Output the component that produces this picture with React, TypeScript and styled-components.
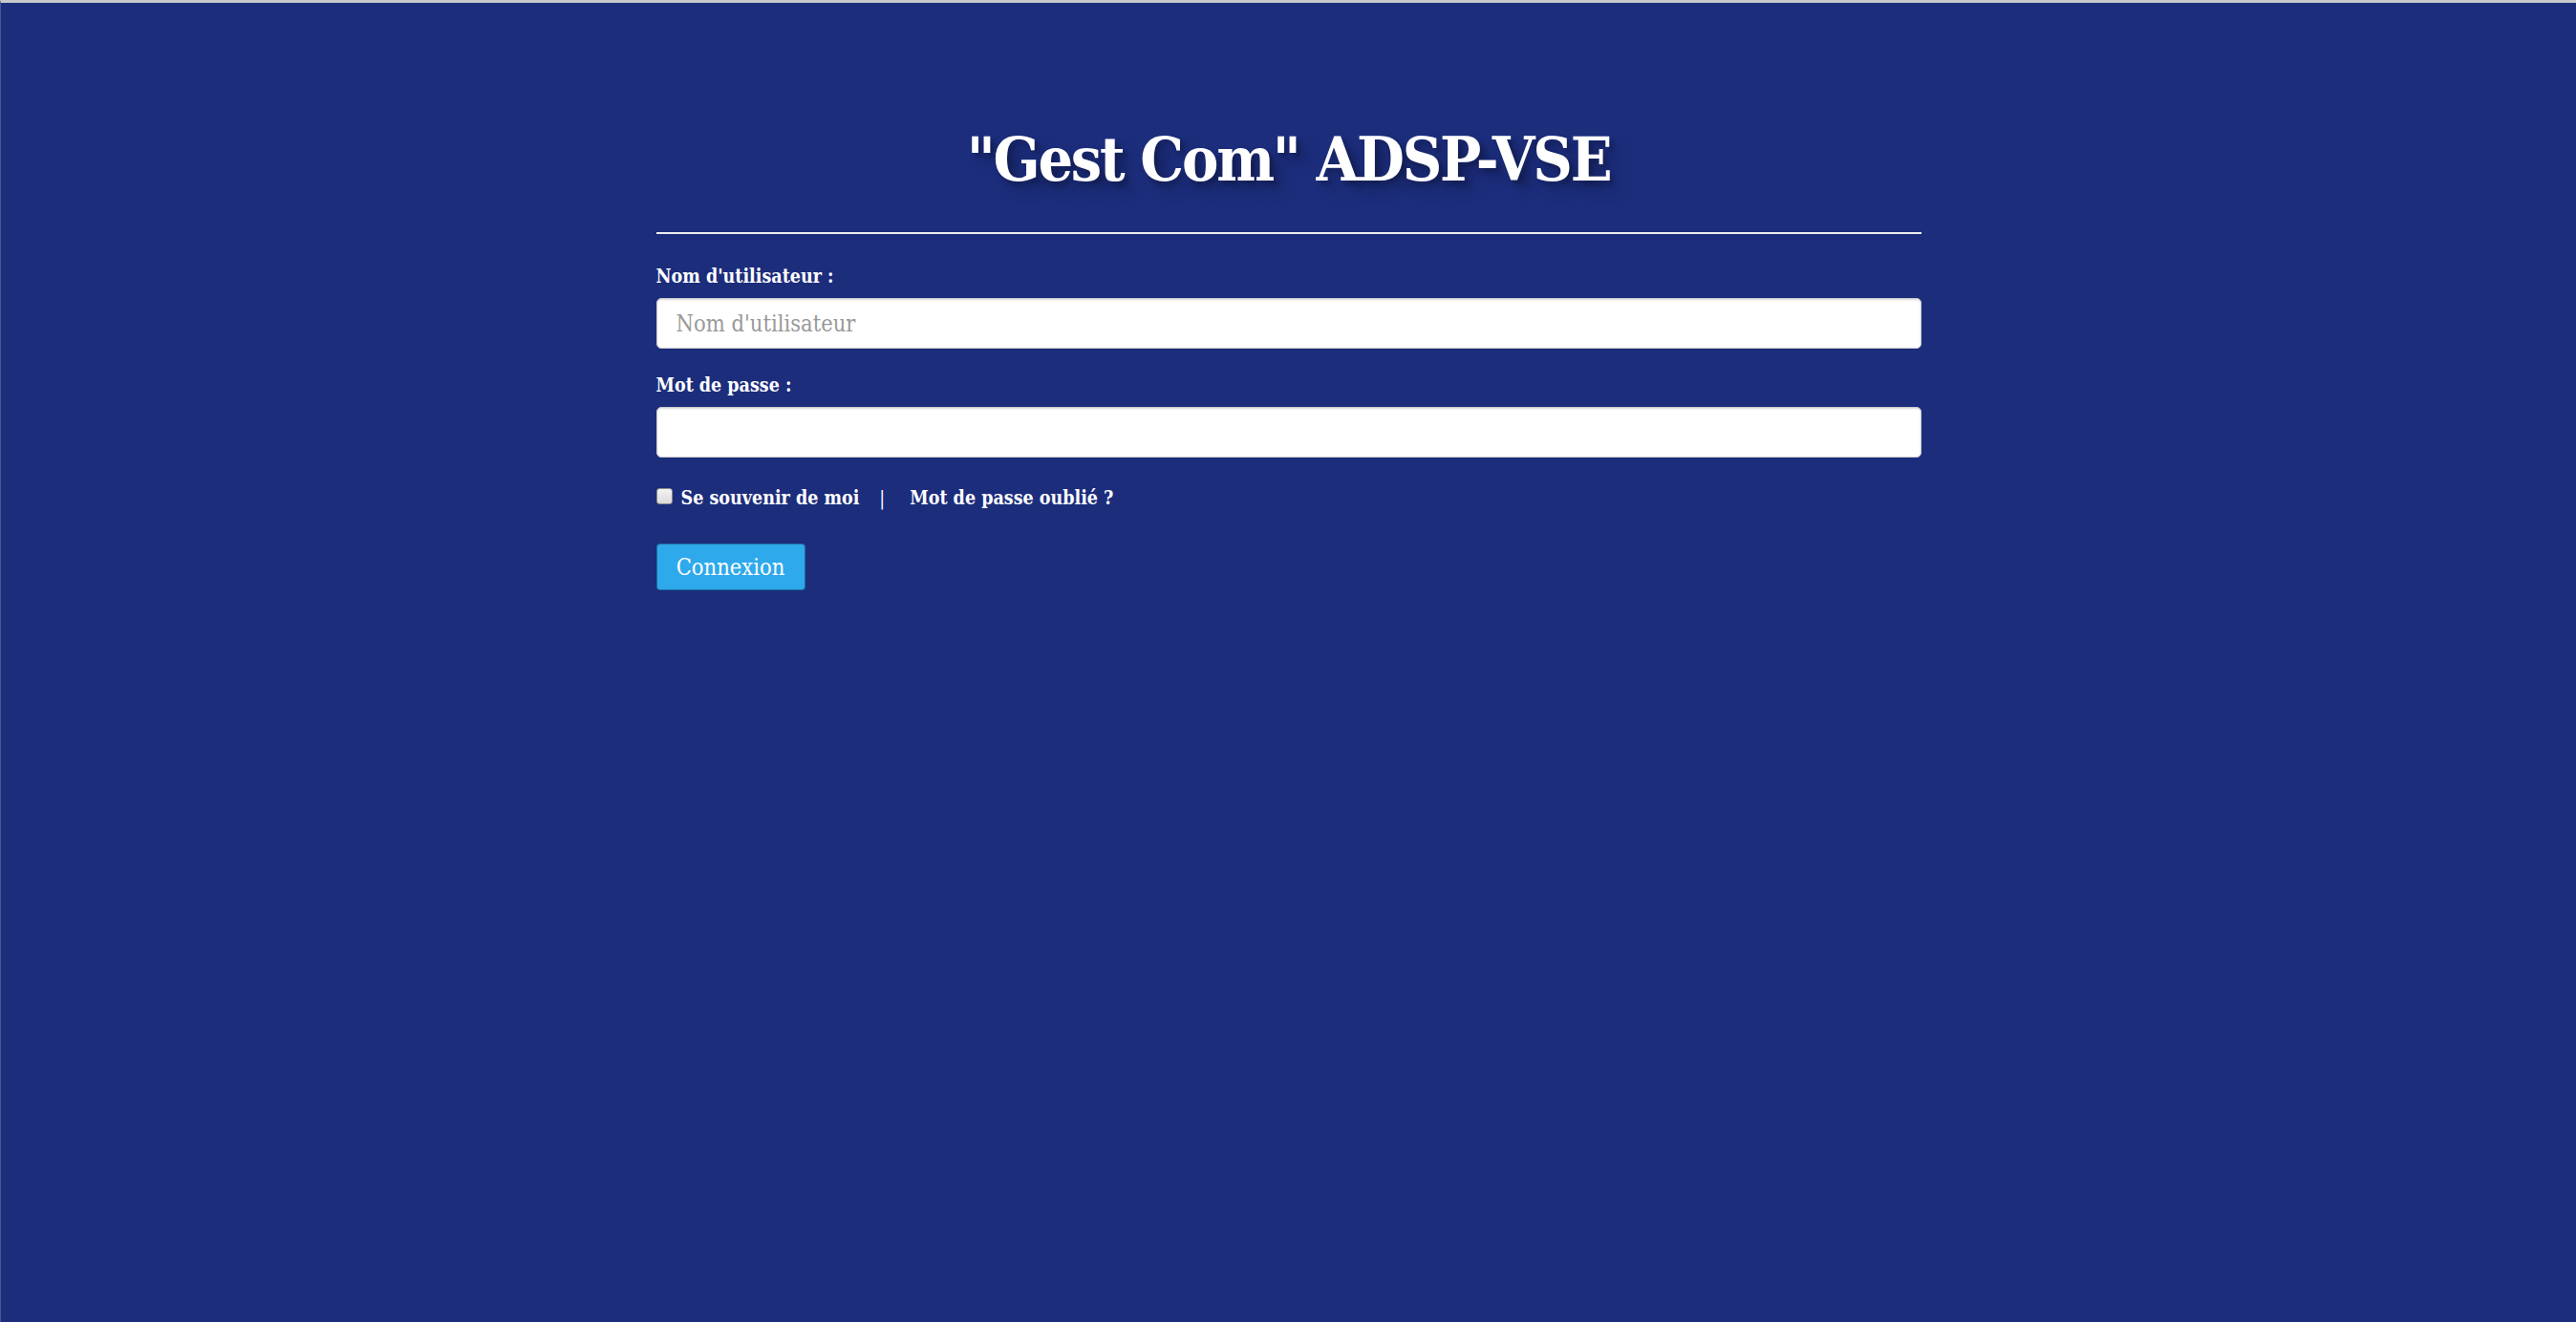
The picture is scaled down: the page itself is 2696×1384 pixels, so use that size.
import React from "react";
import styled, { createGlobalStyle } from "styled-components";

const Global = createGlobalStyle`
  html, body { margin: 0; padding: 0; }
  body {
    background: #1c2d7c;
    font-family: "DejaVu Serif Condensed", "DejaVu Serif", serif;
    color: #fff;
  }
`;

const Page = styled.div`
  min-height: 1384px;
  box-sizing: border-box;
  border-top: 3px solid #c8c8c8;
  border-left: 1px solid #4a5690;
  background: #1c2d7c;
`;

const Container = styled.main`
  width: 1324px;
  margin: 0 auto;
  display: flex;
  flex-direction: column;
`;

const Title = styled.h1`
  margin: 124px 0 0;
  text-align: center;
  font-size: 64px;
  line-height: 80px;
  font-weight: 700;
  letter-spacing: -2.2px;
  color: #fff;
  text-shadow: 4px 4px 5px rgba(0, 0, 0, 0.25), 11px 11px 14px rgba(0, 0, 0, 0.22);
`;

const Rule = styled.hr`
  margin: 36px 0 0;
  border: 0;
  border-top: 2px solid #eee;
  height: 0;
  width: 100%;
`;

const Form = styled.form`
  display: flex;
  flex-direction: column;
  margin-top: 32px;
`;

const Label = styled.label`
  font-size: 19.5px;
  font-weight: 700;
  line-height: 26px;
  margin-bottom: 9px;
`;

const Input = styled.input`
  box-sizing: border-box;
  height: 53px;
  width: 100%;
  padding: 0 20px;
  border: 1px solid #ccc;
  border-radius: 5px;
  background: #fff;
  box-shadow: inset 0 1px 2px rgba(0, 0, 0, 0.15);
  font-family: inherit;
  font-size: 23.5px;
  color: #333;
  margin-bottom: 26px;
  outline: none;
  &::placeholder { color: #999; }
`;

const OptionsRow = styled.div`
  display: flex;
  align-items: center;
  font-size: 19.5px;
  font-weight: 700;
  line-height: 26px;
  margin-top: 4px;
`;

const Check = styled.input`
  appearance: none;
  box-sizing: border-box;
  width: 17px;
  height: 17px;
  margin: 0 9px 0 0;
  border: 1px solid #8a8a8a;
  border-radius: 3px;
  background: linear-gradient(#f2f2f2, #dcdcdc);
  position: relative;
  top: -3px;
  &:checked { background: #2ea9ec; }
`;

const Sep = styled.span`
  margin: 0 26px 0 21px;
  font-weight: 400;
`;

const Link = styled.a`
  color: #fff;
  text-decoration: none;
`;

const Button = styled.button`
  align-self: flex-start;
  margin-top: 34px;
  width: 156px;
  height: 49px;
  padding: 0;
  border: 1px solid rgba(0, 0, 0, 0.35);
  border-radius: 4px;
  background: #2ea9ec;
  color: #fff;
  font-family: inherit;
  font-size: 23.5px;
  font-weight: 400;
  cursor: pointer;
`;

export default function App() {
  return (
    <>
      <Global />
      <Page>
        <Container>
          <Title>"Gest Com" ADSP-VSE</Title>
          <Rule />
          <Form onSubmit={(e) => e.preventDefault()}>
            <Label htmlFor="user">Nom d'utilisateur :</Label>
            <Input id="user" type="text" placeholder="Nom d'utilisateur" />
            <Label htmlFor="pass">Mot de passe :</Label>
            <Input id="pass" type="password" />
            <OptionsRow>
              <Check type="checkbox" id="remember" />
              <span>Se souvenir de moi</span>
              <Sep>|</Sep>
              <Link href="#">Mot de passe oublié ?</Link>
            </OptionsRow>
            <Button type="submit">Connexion</Button>
          </Form>
        </Container>
      </Page>
    </>
  );
}
